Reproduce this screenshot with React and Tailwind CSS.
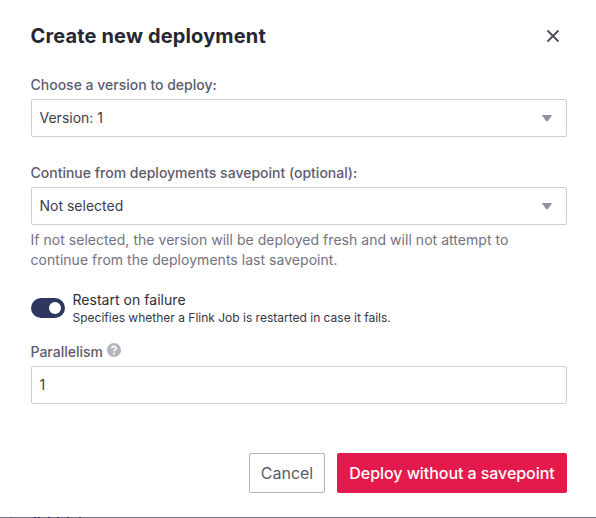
import React from "react";

function Caret() {
  return (
    <svg width="10" height="8" viewBox="0 0 10 8" className="mr-[14px] shrink-0" fill="#92929f">
      <path d="M0.6 1H9.4Q10.2 1 9.7 1.7L6.1 6.7Q5 7.9 3.9 6.7L0.3 1.7Q-0.2 1 0.6 1Z" />
    </svg>
  );
}

function SelectBox({ value }) {
  return (
    <button
      type="button"
      className="flex h-[38px] w-full items-center justify-between rounded-[2px] border border-[#cfcfd1] bg-white pl-[7.5px] text-left text-[14px] leading-5 text-[#3c3b4a]"
    >
      <span>{value}</span>
      <Caret />
    </button>
  );
}

function Label({ children }) {
  return (
    <div className="-ml-[0.5px] h-5 text-[14px] leading-5 font-medium text-[#5c5b6e]">{children}</div>
  );
}

export default function App() {
  return (
    <div className="flex h-[518px] w-[596px] flex-col overflow-hidden bg-white font-['Inter',sans-serif] whitespace-nowrap">
      <main className="flex grow flex-col pr-[29px] pl-[31px]">
        <header className="flex items-center justify-between pt-[21px]">
          <h1 className="-ml-[0.5px] text-[20px] leading-[30px] font-bold tracking-[0.15px] text-[#272733]">
            Create new deployment
          </h1>
          <button type="button" aria-label="Close" className="mr-[7px]">
            <svg width="14" height="14" viewBox="0 0 14 14" stroke="#504f5e" strokeWidth="1.9" fill="none">
              <path d="M1.5 1.5L12.5 12.5M12.5 1.5L1.5 12.5" />
            </svg>
          </button>
        </header>

        <section className="mt-6 flex flex-col gap-1">
          <Label>Choose a version to deploy:</Label>
          <SelectBox value="Version: 1" />
        </section>

        <section className="mt-[26px] flex flex-col gap-1">
          <Label>Continue from deployments savepoint (optional):</Label>
          <SelectBox value="Not selected" />
          <p className="mt-px -ml-[0.5px] text-[14px] leading-5 tracking-[0.035px] text-[#737281]">
            If not selected, the version will be deployed fresh and will not attempt to
            <br />
            continue from the deployments last savepoint.
          </p>
        </section>

        <section className="mt-5 flex gap-[7.5px]">
          <button
            type="button"
            role="switch"
            aria-checked="true"
            aria-label="Restart on failure"
            className="mt-2 flex h-5 w-[34px] items-center justify-end rounded-full bg-[#2f365f] pr-1"
          >
            <span className="size-3 rounded-full bg-white" />
          </button>
          <div>
            <div className="text-[14px] leading-5 tracking-[0.03px] text-[#2e2d39]">Restart on failure</div>
            <div className="text-[12px] leading-4 text-[#373642]">
              Specifies whether a Flink Job is restarted in case it fails.
            </div>
          </div>
        </section>

        <section className="mt-4 flex flex-col gap-1">
          <div className="flex gap-1">
            <Label>Parallelism</Label>
            <svg width="14" height="14" viewBox="0 0 14 14" className="mt-px" fill="none">
              <circle cx="7" cy="7" r="7" fill="#b4b4bc" />
              <path
                d="M4.9 5.5C4.9 2.8 9.1 2.8 9.1 5.3C9.1 6.8 7 6.7 7 8.3"
                stroke="white"
                strokeWidth="1.7"
              />
              <circle cx="7" cy="10.4" r="1" fill="white" />
            </svg>
          </div>
          <input
            defaultValue="1"
            className="h-[38px] w-full rounded-[2px] border border-[#cfcfd1] bg-white px-[7.5px] pb-px text-[14px] leading-5 text-[#3c3b4a] outline-none"
          />
        </section>

        <footer className="mt-[49px] flex justify-end gap-3">
          <button
            type="button"
            className="h-10 w-[76px] rounded-[2px] border border-[#b3b3bb] text-[16px] text-[#5c5b6e]"
          >
            Cancel
          </button>
          <button
            type="button"
            className="h-10 w-[230px] rounded-[2px] bg-[#e51a4c] text-[16px] font-medium tracking-[-0.06px] text-white"
          >
            Deploy without a savepoint
          </button>
        </footer>
      </main>
      <div className="flex h-px shrink-0 bg-[#707080]">
        <i className="ml-[10px] h-px w-[2px] bg-[#4c6078]" />
        <i className="ml-[22px] h-px w-[2px] bg-[#252578]" />
        <i className="ml-[2px] h-px w-[2px] bg-[#252578]" />
        <i className="ml-[8px] h-px w-[2px] bg-[#252578]" />
        <i className="ml-[7px] h-px w-[2px] bg-[#252578]" />
        <i className="ml-[8px] h-px w-[2px] bg-[#252578]" />
        <i className="ml-[10px] h-px w-[2px] bg-[#252578]" />
      </div>
    </div>
  );
}
